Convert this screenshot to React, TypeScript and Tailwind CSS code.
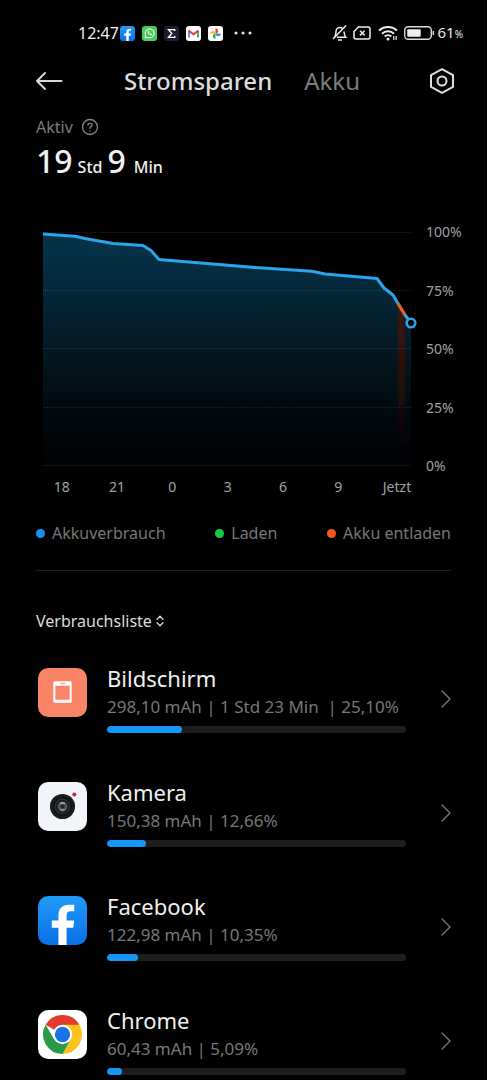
import type { ReactNode } from 'react';

type AppUsage = {
  name: string;
  details: string;
  percent: number;
  icon: ReactNode;
};

function FacebookIcon({ className }: { className: string }) {
  return (
    <svg viewBox="0 0 48 48" className={className} aria-hidden="true">
      <defs>
        <linearGradient id="fbBlue" x1="0" y1="0" x2="0" y2="1">
          <stop offset="0" stopColor="#1f9bf7" />
          <stop offset="1" stopColor="#0b6fe6" />
        </linearGradient>
      </defs>
      <rect width="48" height="48" rx="10" fill="url(#fbBlue)" />
      <path
        d="M20 48V31h-6.500v-7H20v-4.500C20 12.500 23.500 8.500 30 8.500h5.500V15H32c-3 0-4 1.500-4 4v5h7.500l-1 7H28v17z"
        fill="#fff"
      />
    </svg>
  );
}

function ScreenIcon() {
  return (
    <svg viewBox="0 0 48 48" className="size-[49px]" aria-hidden="true">
      <rect width="48" height="48" rx="10" fill="#f98467" />
      <path
        fillRule="evenodd"
        d="M16.500 13h15q1.500 0 1.500 1.500v18q0 1.500-1.500 1.500h-15q-1.500 0-1.500-1.500v-18q0-1.500 1.500-1.500zM17 17.500v13.500h14V17.500zM22 14.500v1h4.500v-1z"
        fill="#fff"
      />
    </svg>
  );
}

function CameraIcon() {
  return (
    <svg viewBox="0 0 48 48" className="size-[49px]" aria-hidden="true">
      <rect width="48" height="48" rx="10" fill="#f1f4f8" />
      <circle cx="24" cy="24" r="12.300" fill="#1b1c1e" />
      <circle cx="24" cy="24" r="8.500" fill="#2b2d30" stroke="#0c0c0d" strokeWidth="1" />
      <circle cx="24" cy="24" r="5.500" fill="#55585c" stroke="#111" strokeWidth="1.200" />
      <ellipse cx="24" cy="20.800" rx="2.600" ry="1.300" fill="#9b9ea1" />
      <ellipse cx="24" cy="27.400" rx="2.600" ry="1.300" fill="#85888b" />
      <circle cx="24" cy="24" r="2.200" fill="#25272a" />
      <circle cx="35.600" cy="12.300" r="2" fill="#d62239" />
    </svg>
  );
}

function ChromeIcon() {
  return (
    <svg viewBox="0 0 48 48" className="size-[49px]" aria-hidden="true">
      <rect width="48" height="48" rx="10" fill="#fff" />
      <path d="M24 24L7.500 14.500A19 19 0 0 1 40.500 14.500z" fill="#e33b2e" />
      <path d="M24 14.500H40.500A19 19 0 0 1 24 43L32.200 28.750z" fill="#fcc31e" />
      <path d="M15.800 28.750L7.500 14.500A19 19 0 0 0 24 43L32.200 28.750z" fill="#2a9a49" />
      <circle cx="24" cy="24" r="9.500" fill="#fff" />
      <circle cx="24" cy="24" r="7.500" fill="#1b73e8" />
    </svg>
  );
}

const apps: AppUsage[] = [
  { name: 'Bildschirm', details: '298,10 mAh | 1 Std 23 Min\u00a0 | 25,10%', percent: 25.1, icon: <ScreenIcon /> },
  { name: 'Kamera', details: '150,38 mAh | 12,66%', percent: 13, icon: <CameraIcon /> },
  { name: 'Facebook', details: '122,98 mAh | 10,35%', percent: 10.35, icon: <FacebookIcon className="size-[49px]" /> },
  { name: 'Chrome', details: '60,43 mAh | 5,09%', percent: 5.09, icon: <ChromeIcon /> },
];

function StatusBar() {
  return (
    <div className="flex h-[66px] items-center justify-between pr-6 pl-[78px]">
      <div className="flex items-center">
        <span className="mr-px text-base leading-5 text-[#f0f0f0]">12:47</span>
        <div className="flex items-center gap-[7px]">
          <FacebookIcon className="size-[15px]" />
          <svg viewBox="0 0 15 15" className="size-[15px]" aria-hidden="true">
            <rect width="15" height="15" rx="3" fill="#4ccb5c" />
            <path d="M3 12l.7-2.500A4.500 4.500 0 1 1 5.500 11.300z" fill="none" stroke="#fff" strokeWidth="1" strokeLinejoin="round" />
            <path d="M5.800 5.200c-.6 1.500 2 4.300 3.700 4l.5-1-1.200-.7-.6.500c-.7-.3-1.100-.8-1.300-1.400l.4-.5-.5-1.200z" fill="#fff" />
          </svg>
          <svg viewBox="0 0 15 15" className="size-[15px]" aria-hidden="true">
            <rect width="15" height="15" rx="3" fill="#1d1d31" />
            <path d="M10.800 5V3.700H4.500L7.800 7.500l-3.300 3.800h6.300V10" fill="none" stroke="#fff" strokeWidth="1.300" />
          </svg>
          <svg viewBox="0 0 15 15" className="size-[15px]" aria-hidden="true">
            <rect width="15" height="15" rx="3" fill="#fff" />
            <path d="M3 11.500V5" stroke="#4285f4" strokeWidth="1.800" />
            <path d="M12 11.500V5" stroke="#34a853" strokeWidth="1.800" />
            <path d="M2.500 4.400l5 3.900 5-3.900" fill="none" stroke="#e0392d" strokeWidth="1.900" />
          </svg>
          <svg viewBox="0 0 15 15" className="size-[15px]" aria-hidden="true">
            <rect width="15" height="15" rx="3" fill="#fff" />
            <path d="M7.500 7.500V2.300a2.600 2.600 0 0 1 0 5.200z" fill="#e8453c" />
            <path d="M7.500 7.500h5.200a2.600 2.600 0 0 1-5.200 0z" fill="#4285f4" />
            <path d="M7.500 7.500v5.200a2.600 2.600 0 0 1 0-5.200z" fill="#34a853" />
            <path d="M7.500 7.500H2.300a2.600 2.600 0 0 1 5.200 0z" fill="#fbbc04" />
          </svg>
        </div>
        <svg viewBox="0 0 18 4" className="ml-[11px] h-1 w-[18px]" fill="#e8e8e8" aria-hidden="true">
          <circle cx="2" cy="2" r="1.500" />
          <circle cx="9" cy="2" r="1.500" />
          <circle cx="16" cy="2" r="1.500" />
        </svg>
      </div>
      <div className="flex items-center">
        <svg viewBox="0 0 18 18" className="mr-1 size-[18px]" fill="none" stroke="#eee" strokeWidth="1.500" aria-hidden="true">
          <path d="M3.500 12.800C5 11.500 4.800 9.500 5 7.500c.2-2.300 1.800-4 4-4 1 0 1.800.3 2.500.8M13 7.500c.2 2.500.2 4 1.700 5.700H6" />
          <path d="M2 15L15 1.500" />
          <path d="M7 16h4" />
        </svg>
        <svg viewBox="0 0 18 16" className="mr-[7px] h-4 w-[18px]" fill="none" stroke="#eee" strokeWidth="1.500" aria-hidden="true">
          <path d="M5.500 2H15q2 0 2 2v8q0 2-2 2H3q-2 0-2-2V6.500z" />
          <path d="M7 5.800l4.600 4.600M11.600 5.800L7 10.400" />
        </svg>
        <svg viewBox="0 0 20 16" className="mr-[6px] h-4 w-5" fill="none" stroke="#eee" strokeWidth="2" aria-hidden="true">
          <path d="M1 5.500a13 13 0 0 1 18 0" />
          <path d="M4 8.700a8.800 8.800 0 0 1 12 0" />
          <path d="M6.700 11.600a4.800 4.800 0 0 1 6.600 0" />
          <circle cx="10" cy="14" r="1.500" fill="#eee" stroke="none" />
          <path d="M15.800 11v4M18.200 11v4" strokeWidth="1.200" />
        </svg>
        <svg viewBox="0 0 31 14" className="mr-[3px] h-[14px] w-[31px]" aria-hidden="true">
          <rect x=".7" y=".7" width="26.600" height="12.600" rx="3.500" fill="none" stroke="#ddd" strokeWidth="1.400" />
          <rect x="3.200" y="3.200" width="13.500" height="7.600" rx="1" fill="#eee" />
          <path d="M29.300 5v4" stroke="#ddd" strokeWidth="1.500" />
        </svg>
        <span className="text-[15px] leading-5 text-[#e8e8e8]">
          61<span className="text-[10px]">%</span>
        </span>
      </div>
    </div>
  );
}

function BatteryChart() {
  const line = 'M0 2L32 4.300L42 6.500L70 11.500L100 13.500L108 18.500L116 27.500L170 32L212 35.500L269 39.300L282 42L334 46.500L341 56L350 63L355 71.500L362 83L368 91';
  return (
    <svg viewBox="0 0 368 234" className="block w-full overflow-visible" role="img" aria-label="Akkustand">
      <defs>
        <linearGradient id="fillBlue" x1="0" y1="0" x2="0" y2="234" gradientUnits="userSpaceOnUse">
          <stop offset="0" stopColor="#06344b" />
          <stop offset=".25" stopColor="#05273a" />
          <stop offset=".5" stopColor="#031823" />
          <stop offset=".75" stopColor="#010a10" />
          <stop offset="1" stopColor="#000102" />
        </linearGradient>
        <linearGradient id="fillOrange" x1="0" y1="76" x2="0" y2="220" gradientUnits="userSpaceOnUse">
          <stop offset="0" stopColor="#3a1c0c" />
          <stop offset=".3" stopColor="#331007" />
          <stop offset="1" stopColor="#2a0c04" stopOpacity="0" />
        </linearGradient>
        <filter id="soft" x="345" y="70" width="28" height="160" filterUnits="userSpaceOnUse">
          <feGaussianBlur stdDeviation="1.500" />
        </filter>
      </defs>
      <path d={`${line}V234H0z`} fill="url(#fillBlue)" />
      <path d="M355 76L362 86V220H355z" fill="url(#fillOrange)" filter="url(#soft)" />
      <path d="M0 0.500H369M0 58.500H369M0 116.500H369M0 175.500H369M0 233.500H369" stroke="#fff" strokeOpacity=".12" strokeDasharray="1 1" />
      <path d={line} fill="none" stroke="#2ba5ea" strokeWidth="3" strokeLinejoin="round" />
      <path d="M355 71.500L362 83" stroke="#ee5a24" strokeWidth="3" />
      <circle cx="368" cy="91" r="4.300" fill="#000" stroke="#2ba5ea" strokeWidth="2.600" />
    </svg>
  );
}

function Legend({ dot, label }: { dot: string; label: string }) {
  return (
    <li className="flex items-center gap-[7px]">
      <span className={`size-[9px] rounded-full ${dot}`} />
      {label}
    </li>
  );
}

export default function App() {
  return (
    <div className="min-h-screen bg-black pb-1 font-['Noto_Sans',sans-serif] text-[#e6e6e6]">
      <StatusBar />

      <header className="flex h-[30px] items-center px-[34px]">
        <button type="button" aria-label="Zurück">
          <svg viewBox="0 0 30 22" className="h-[22px] w-[30px]" fill="none" stroke="#d8d8d8" strokeWidth="2" strokeLinecap="round" strokeLinejoin="round" aria-hidden="true">
            <path d="M27.500 11H3.500M11 3L3 11L11 19" />
          </svg>
        </button>
        <nav className="flex flex-1 items-center justify-center gap-8 pr-2 text-2xl leading-[30px]">
          <button type="button" className="font-medium text-[#dcdcdc]">Stromsparen</button>
          <button type="button" className="text-[#7c7c7c]">Akku</button>
        </nav>
        <button type="button" aria-label="Einstellungen" className="-mr-[3px]">
          <svg viewBox="0 0 28 28" className="size-7" fill="none" stroke="#dedede" strokeWidth="2" strokeLinejoin="round" aria-hidden="true">
            <path d="M14 2.200L25 8.200V19.800L14 25.800L3 19.800V8.200z" />
            <circle cx="14" cy="14" r="4.500" />
          </svg>
        </button>
      </header>

      <section className="px-9 pt-[21px]">
        <div className="flex h-5 items-center gap-2 text-base leading-5 text-[#7c7c7c]">
          Aktiv
          <button type="button" aria-label="Hilfe">
            <svg viewBox="0 0 18 18" className="size-[18px]" fill="none" stroke="#858585" strokeWidth="1.300" strokeLinecap="round" aria-hidden="true">
              <circle cx="9" cy="9" r="7.500" />
              <path d="M6.900 7.200C7 4.700 11.100 4.800 11.100 7.200C11.100 8.600 9 8.700 9 10.400M9 12.800V12.900" />
            </svg>
          </button>
        </div>
        <p className="flex h-11 items-baseline text-[32px] leading-[48px] font-medium text-[#f2f2f2]">
          19<span className="mx-[5px] text-base">Std</span>9
          <span className="ml-2 text-base">Min</span>
        </p>
      </section>

      <section className="pt-[51px] text-sm leading-5 text-[#a0a0a0]">
        <div className="flex items-center gap-[15px] pr-7 pl-[43px]">
          <div className="flex-1">
            <BatteryChart />
          </div>
          <div className="-my-[10px] flex w-[33px] flex-col justify-between self-stretch">
            <span>100%</span>
            <span>75%</span>
            <span>50%</span>
            <span>25%</span>
            <span>0%</span>
          </div>
        </div>
        <div className="mt-[11px] grid grid-cols-[repeat(6,1fr)_62px] pr-[59px] pl-[34px] text-center">
          <span>18</span>
          <span>21</span>
          <span>0</span>
          <span>3</span>
          <span>6</span>
          <span>9</span>
          <span>Jetzt</span>
        </div>
      </section>

      <ul className="mx-9 flex justify-between border-b border-[#202020] pt-6 pb-[25px] text-base leading-6 text-[#777]">
        <Legend dot="bg-[#1192f5]" label="Akkuverbrauch" />
        <Legend dot="bg-[#15c944]" label="Laden" />
        <Legend dot="bg-[#f4581c]" label="Akku entladen" />
      </ul>

      <main className="px-9 pt-[38px]">
        <button type="button" className="flex items-center gap-[3px] text-base leading-6 text-[#dcdcdc]">
          Verbrauchsliste
          <svg viewBox="0 0 10 12" className="h-3 w-[10px]" fill="none" stroke="#dcdcdc" strokeWidth="1.300" strokeLinecap="round" strokeLinejoin="round" aria-hidden="true">
            <path d="M2 4.300L5 1.300L8 4.300M2 7.700L5 10.700L8 7.700" />
          </svg>
        </button>
        <ul className="mt-[31px] flex flex-col gap-[45px]">
          {apps.map((app) => (
            <li key={app.name}>
              <a href="#" className="flex items-center gap-5">
                <span className="-mt-3 ml-[2px] shrink-0">{app.icon}</span>
                <div className="min-w-0 flex-1">
                  <h2 className="text-[22px] leading-7 text-[#f0f0f0]">{app.name}</h2>
                  <p className="text-[17px] leading-[30px] whitespace-nowrap text-[#777]">{app.details}</p>
                  <div className="mt-1 h-[7px] overflow-hidden rounded-full bg-[#1d1d1d]">
                    <div className="h-full rounded-full bg-[#1598f5]" style={{ width: `${app.percent}%` }} />
                  </div>
                </div>
                <svg viewBox="0 0 10 18" className="ml-[15px] h-[18px] w-[10px] shrink-0" fill="none" stroke="#777" strokeWidth="1.400" strokeLinecap="round" strokeLinejoin="round" aria-hidden="true">
                  <path d="M1 1L9 9L1 17" />
                </svg>
              </a>
            </li>
          ))}
        </ul>
      </main>
    </div>
  );
}
